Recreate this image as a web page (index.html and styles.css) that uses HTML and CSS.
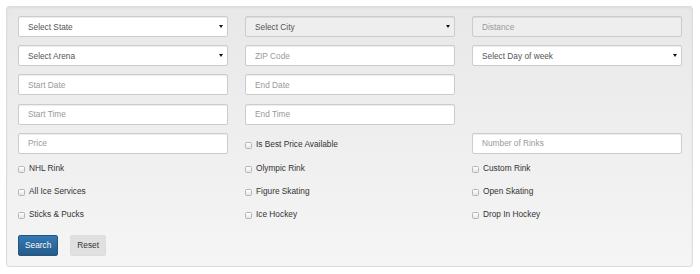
FILE: index.html
```html
<!DOCTYPE html>
<html lang="en">
<head>
    <meta charset="UTF-8">
    <meta name="viewport" content="width=device-width, initial-scale=1.0">
    <title>Rink Search</title>
    <link rel="stylesheet" href="styles.css">
</head>
<body>
    <form class="well">
        <div class="fields">
            <div class="select-wrap"><select class="control"><option>Select State</option></select></div>
            <div class="select-wrap"><select class="control" disabled><option>Select City</option></select></div>
            <input class="control" type="text" placeholder="Distance" disabled>

            <div class="select-wrap"><select class="control"><option>Select Arena</option></select></div>
            <input class="control" type="text" placeholder="ZIP Code">
            <div class="select-wrap"><select class="control"><option>Select Day of week</option></select></div>

            <input class="control" type="text" placeholder="Start Date">
            <input class="control" type="text" placeholder="End Date">
            <div></div>

            <input class="control" type="text" placeholder="Start Time">
            <input class="control" type="text" placeholder="End Time">
            <div></div>

            <input class="control" type="text" placeholder="Price">
            <label class="check check-inline"><input type="checkbox"> Is Best Price Available</label>
            <input class="control" type="text" placeholder="Number of Rinks">
        </div>

        <div class="checks">
            <label class="check"><input type="checkbox"> NHL Rink</label>
            <label class="check"><input type="checkbox"> Olympic Rink</label>
            <label class="check"><input type="checkbox"> Custom Rink</label>

            <label class="check"><input type="checkbox"> All Ice Services</label>
            <label class="check"><input type="checkbox"> Figure Skating</label>
            <label class="check"><input type="checkbox"> Open Skating</label>

            <label class="check"><input type="checkbox"> Sticks &amp; Pucks</label>
            <label class="check"><input type="checkbox"> Ice Hockey</label>
            <label class="check"><input type="checkbox"> Drop In Hockey</label>
        </div>

        <div class="actions">
            <button type="button" class="btn btn-primary">Search</button>
            <button type="button" class="btn btn-default">Reset</button>
        </div>
    </form>
</body>
</html>
```

FILE: styles.css
```css
body {
    margin: 6px;
    background: #fff;
    font-family: "Liberation Sans", Arial, sans-serif;
    font-size: 8.3px;
    color: #333;
}

.well {
    box-sizing: border-box;
    width: 687px;
    height: 261px;
    padding: 9px 11px 0 11px;
    background-image: linear-gradient(to bottom, #e8e8e8 0, #f5f5f5 100%);
    border: 1px solid #dcdcdc;
    border-radius: 3px;
    box-shadow: inset 0 1px 3px rgba(0, 0, 0, 0.05), 0 1px 0 rgba(255, 255, 255, 0.1);
}

.fields,
.checks {
    display: grid;
    grid-template-columns: repeat(3, 210px);
    column-gap: 17px;
}

.fields {
    row-gap: 8.2px;
}

.control {
    display: block;
    box-sizing: border-box;
    width: 100%;
    height: 21px;
    margin: 0;
    padding: 0 9px;
    font-family: inherit;
    font-size: 8.3px;
    color: #555;
    background: #fff;
    border: 1px solid #ccc;
    border-radius: 2px;
    box-shadow: inset 0 1px 1px rgba(0, 0, 0, 0.075);
    outline: none;
}

.control::placeholder {
    color: #999;
}

.control:disabled {
    background: #eee;
    opacity: 1;
}

select.control {
    appearance: none;
    -webkit-appearance: none;
    padding: 0 9px;
}

.select-wrap {
    position: relative;
}

.select-wrap::after {
    content: '';
    position: absolute;
    right: 5px;
    top: 9px;
    border-left: 2px solid transparent;
    border-right: 2px solid transparent;
    border-top: 3px solid #111;
}

.check {
    display: flex;
    align-items: center;
    gap: 4px;
    height: 23px;
    color: #333;
}

.check-inline {
    height: 21px;
    padding-top: 2px;
    box-sizing: border-box;
}

.check input {
    appearance: none;
    -webkit-appearance: none;
    box-sizing: border-box;
    width: 7px;
    height: 7px;
    margin: 2px 0 0 0;
    border: 1px solid #b5b5b5;
    border-radius: 1.5px;
    background: linear-gradient(to bottom, #fff, #e6e6e6);
}

.checks {
    margin-top: 3px;
}

.actions {
    display: flex;
    gap: 12px;
    margin-top: 9px;
}

.btn {
    box-sizing: border-box;
    height: 21px;
    padding: 0 6px;
    font-family: inherit;
    font-size: 8.3px;
    border-radius: 2px;
    border: 1px solid transparent;
}

.btn-primary {
    color: #fff;
    background-image: linear-gradient(to bottom, #337ab7 0, #265a88 100%);
    border-color: #245580;
    text-shadow: 0 -1px 0 rgba(0, 0, 0, 0.2);
}

.btn-default {
    color: #333;
    padding: 0 6px;
    background: #e0e0e0;
    border-color: #ddd;
}
```
